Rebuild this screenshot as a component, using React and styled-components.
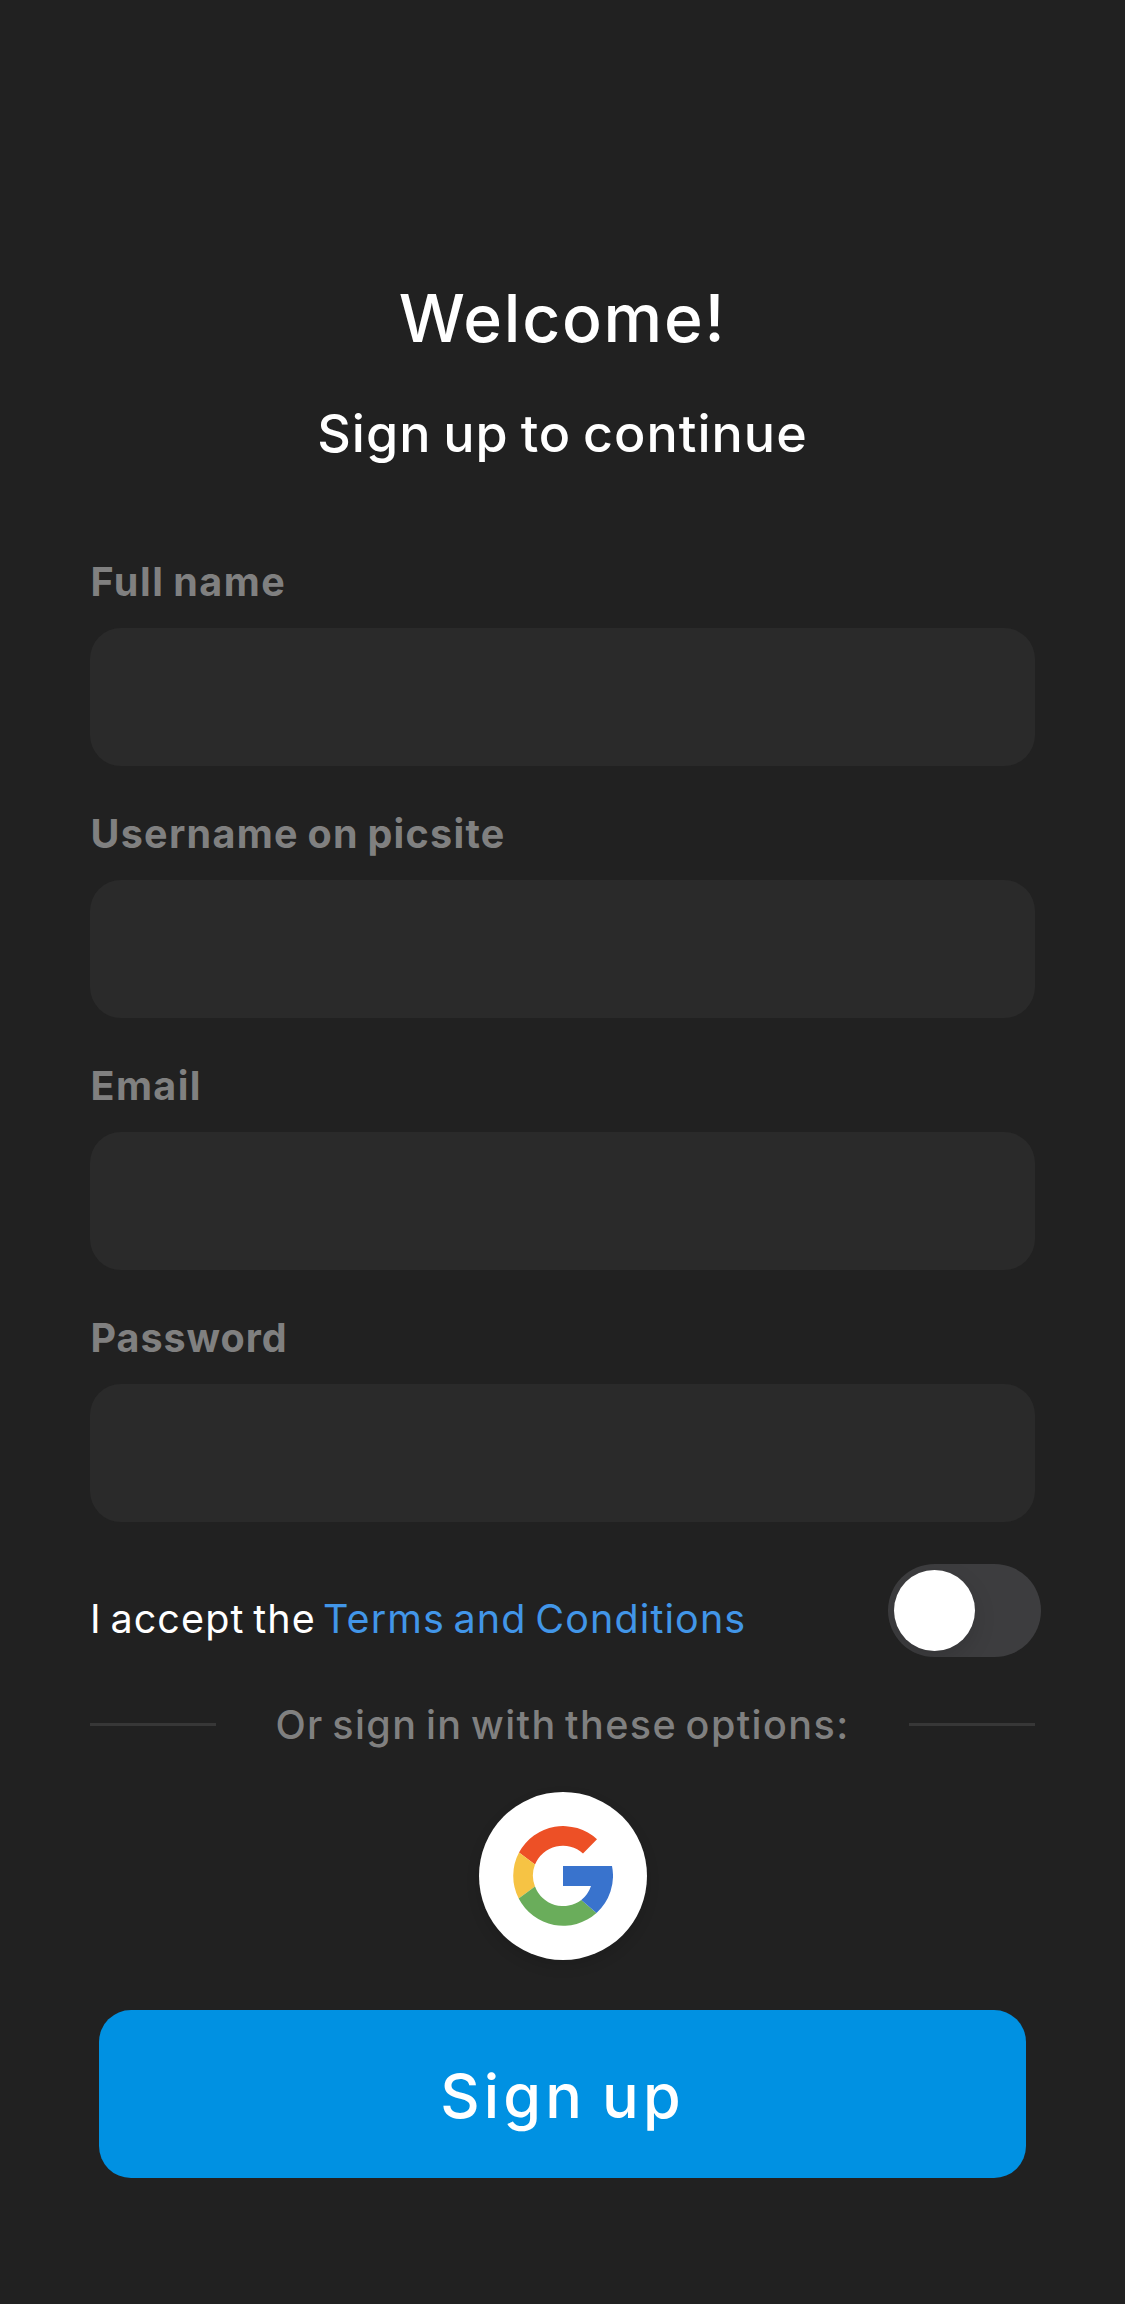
import React from "react";
import styled, { createGlobalStyle } from "styled-components";

const GlobalStyle = createGlobalStyle`
  *, *::before, *::after {
    box-sizing: border-box;
  }
  body {
    margin: 0;
    background: #212121;
    font-family: Inter, "Liberation Sans", sans-serif;
  }
`;

const Screen = styled.main`
  display: flex;
  flex-direction: column;
  min-height: 2304px;
  padding: 278px 90px 0;
  background: #212121;
  color: #fff;
`;

const Title = styled.h1`
  margin: 0;
  font-size: 66px;
  font-weight: 500;
  line-height: 80px;
  letter-spacing: 1.75px;
  text-align: center;
`;

const Subtitle = styled.p`
  margin: 45px 0 0;
  font-size: 52px;
  font-weight: 500;
  line-height: 61px;
  letter-spacing: 1px;
  word-spacing: -3px;
  text-align: center;
`;

const Fields = styled.form`
  display: flex;
  flex-direction: column;
  gap: 45px;
  margin-top: 95px;
`;

const Field = styled.label`
  display: flex;
  flex-direction: column;
  gap: 23px;
`;

const FieldLabel = styled.span`
  padding-left: 0.5px;
  color: #808080;
  font-size: 39.5px;
  font-weight: 700;
  line-height: 46px;
  letter-spacing: ${(p) => p.$tracking}px;
  word-spacing: -2px;
`;

const Input = styled.input`
  width: 100%;
  height: 138px;
  padding: 0 36px;
  border: 0;
  border-radius: 31px;
  outline: 0;
  background: #2a2a2a;
  color: #fff;
  font: inherit;
  font-size: 42px;
`;

const TermsRow = styled.div`
  display: flex;
  align-items: flex-start;
  justify-content: space-between;
  margin: 42px -6px 0 0;
`;

const TermsText = styled.p`
  margin: 32px 0 0;
  font-size: 39.5px;
  line-height: 46px;
  letter-spacing: 1.1px;
  word-spacing: -3.5px;
  white-space: nowrap;
`;

const TermsLink = styled.a`
  margin-left: -1.5px;
  color: #4296e8;
  text-decoration: none;
`;

const Toggle = styled.button`
  display: flex;
  width: 153px;
  height: 93px;
  padding: 6px;
  border: 0;
  border-radius: 47px;
  background: #3d3d3f;
  overflow: hidden;
`;

const Knob = styled.span`
  width: 81px;
  height: 81px;
  border-radius: 50%;
  background: #fff;
  box-shadow: 0 8px 22px rgba(0, 0, 0, 0.13);
`;

const Divider = styled.div`
  display: flex;
  align-items: flex-start;
  justify-content: space-between;
  margin-top: 45px;
`;

const Line = styled.span`
  width: 126px;
  height: 3px;
  margin-top: 21px;
  background: #373737;
`;

const DividerText = styled.span`
  color: #808080;
  font-size: 39.5px;
  font-weight: 500;
  line-height: 46px;
  letter-spacing: 1.43px;
  word-spacing: -3.5px;
  white-space: nowrap;
`;

const GoogleButton = styled.button`
  display: flex;
  align-items: center;
  align-self: center;
  justify-content: center;
  width: 168px;
  height: 168px;
  margin: 44px 0 0 1px;
  padding: 0;
  border: 0;
  border-radius: 50%;
  background: #fff;
  box-shadow: 0 6px 14px rgba(0, 0, 0, 0.12);
`;

const SubmitButton = styled.button`
  height: 168px;
  margin: 50px 9px 0;
  padding: 4px 0 0;
  border: 0;
  border-radius: 32px;
  background: #0091e2;
  color: #fff;
  font-family: inherit;
  font-size: 61px;
  font-weight: 500;
  line-height: 74px;
  letter-spacing: 4.1px;
  word-spacing: -4.2px;
`;

const GoogleLogo = () => (
  <svg width="100" height="100" viewBox="-50 -50 100 100" aria-hidden="true">
    <path fill="#ed5026" d="M-44 -23.5A50 50 0 0 1 34 -36.7L20 -22.5A30 30 0 0 0 -28 -11.5Z" />
    <path fill="#f6c344" d="M-44 -23.5A50 50 0 0 0 -44.3 22.6L-28 10.5A30 30 0 0 1 -28 -11.5Z" />
    <path fill="#6aad5b" d="M-44.3 22.6A50 50 0 0 0 33.5 37L18.3 24A30 30 0 0 1 -28 10.5Z" />
    <path fill="#3973cd" d="M0 -10H49A50 50 0 0 1 33.5 37L18.3 24A30 30 0 0 0 28 10H0Z" />
  </svg>
);

const fields = [
  { label: "Full name", type: "text", tracking: 1.5 },
  { label: "Username on picsite", type: "text", tracking: 1.28 },
  { label: "Email", type: "email", tracking: 1.4 },
  { label: "Password", type: "password", tracking: 0.95 },
];

export default function App() {
  return (
    <Screen>
      <GlobalStyle />
      <Title>Welcome!</Title>
      <Subtitle>Sign up to continue</Subtitle>
      <Fields>
        {fields.map(({ label, type, tracking }) => (
          <Field key={label}>
            <FieldLabel $tracking={tracking}>{label}</FieldLabel>
            <Input type={type} />
          </Field>
        ))}
      </Fields>
      <TermsRow>
        <TermsText>
          I accept the <TermsLink href="#">Terms and Conditions</TermsLink>
        </TermsText>
        <Toggle type="button" role="switch" aria-checked="false">
          <Knob />
        </Toggle>
      </TermsRow>
      <Divider>
        <Line />
        <DividerText>Or sign in with these options:</DividerText>
        <Line />
      </Divider>
      <GoogleButton type="button">
        <GoogleLogo />
      </GoogleButton>
      <SubmitButton type="submit">Sign up</SubmitButton>
    </Screen>
  );
}
